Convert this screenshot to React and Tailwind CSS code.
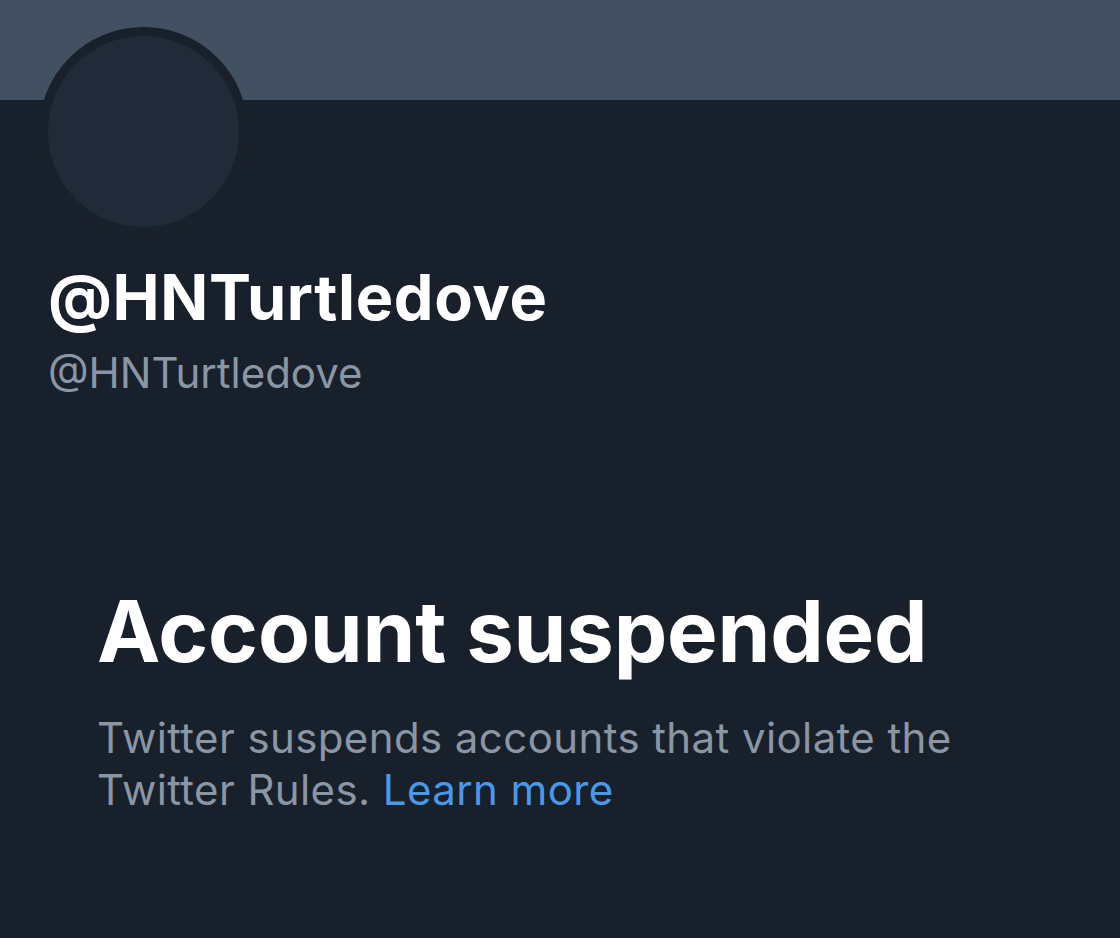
export default function App() {
  return (
    <div className="min-h-[938px] w-full bg-[#18202b] font-['Inter','Noto_Sans',sans-serif] antialiased">
      <div className="h-[100px] w-full bg-[#435062]" />
      <div className="px-[39px]">
        <div className="-mt-[73px] h-[209px] w-[209px] rounded-full border-[9px] border-[#18202b] bg-[#212a38]" />
      </div>
      <div className="px-[48px] pt-[25px]">
        <h1 className="text-[63px] font-bold leading-[72px] tracking-[0.6px] text-white">@HNTurtledove</h1>
        <p className="mt-[16px] text-[42px] leading-[48px] text-[#8b96a4]">@HNTurtledove</p>
      </div>
      <div className="px-[97px] pt-[187px]">
        <h2 className="text-[85px] font-bold leading-[96px] tracking-[-0.2px] text-white">Account suspended</h2>
        <p className="mt-[32px] text-[42px] leading-[52px] tracking-[0.4px] text-[#8b96a4]">
          Twitter suspends accounts that violate the
          <br />
          Twitter Rules.{" "}
          <a href="#" className="text-[#4a99e9]">Learn more</a>
        </p>
      </div>
    </div>
  );
}
